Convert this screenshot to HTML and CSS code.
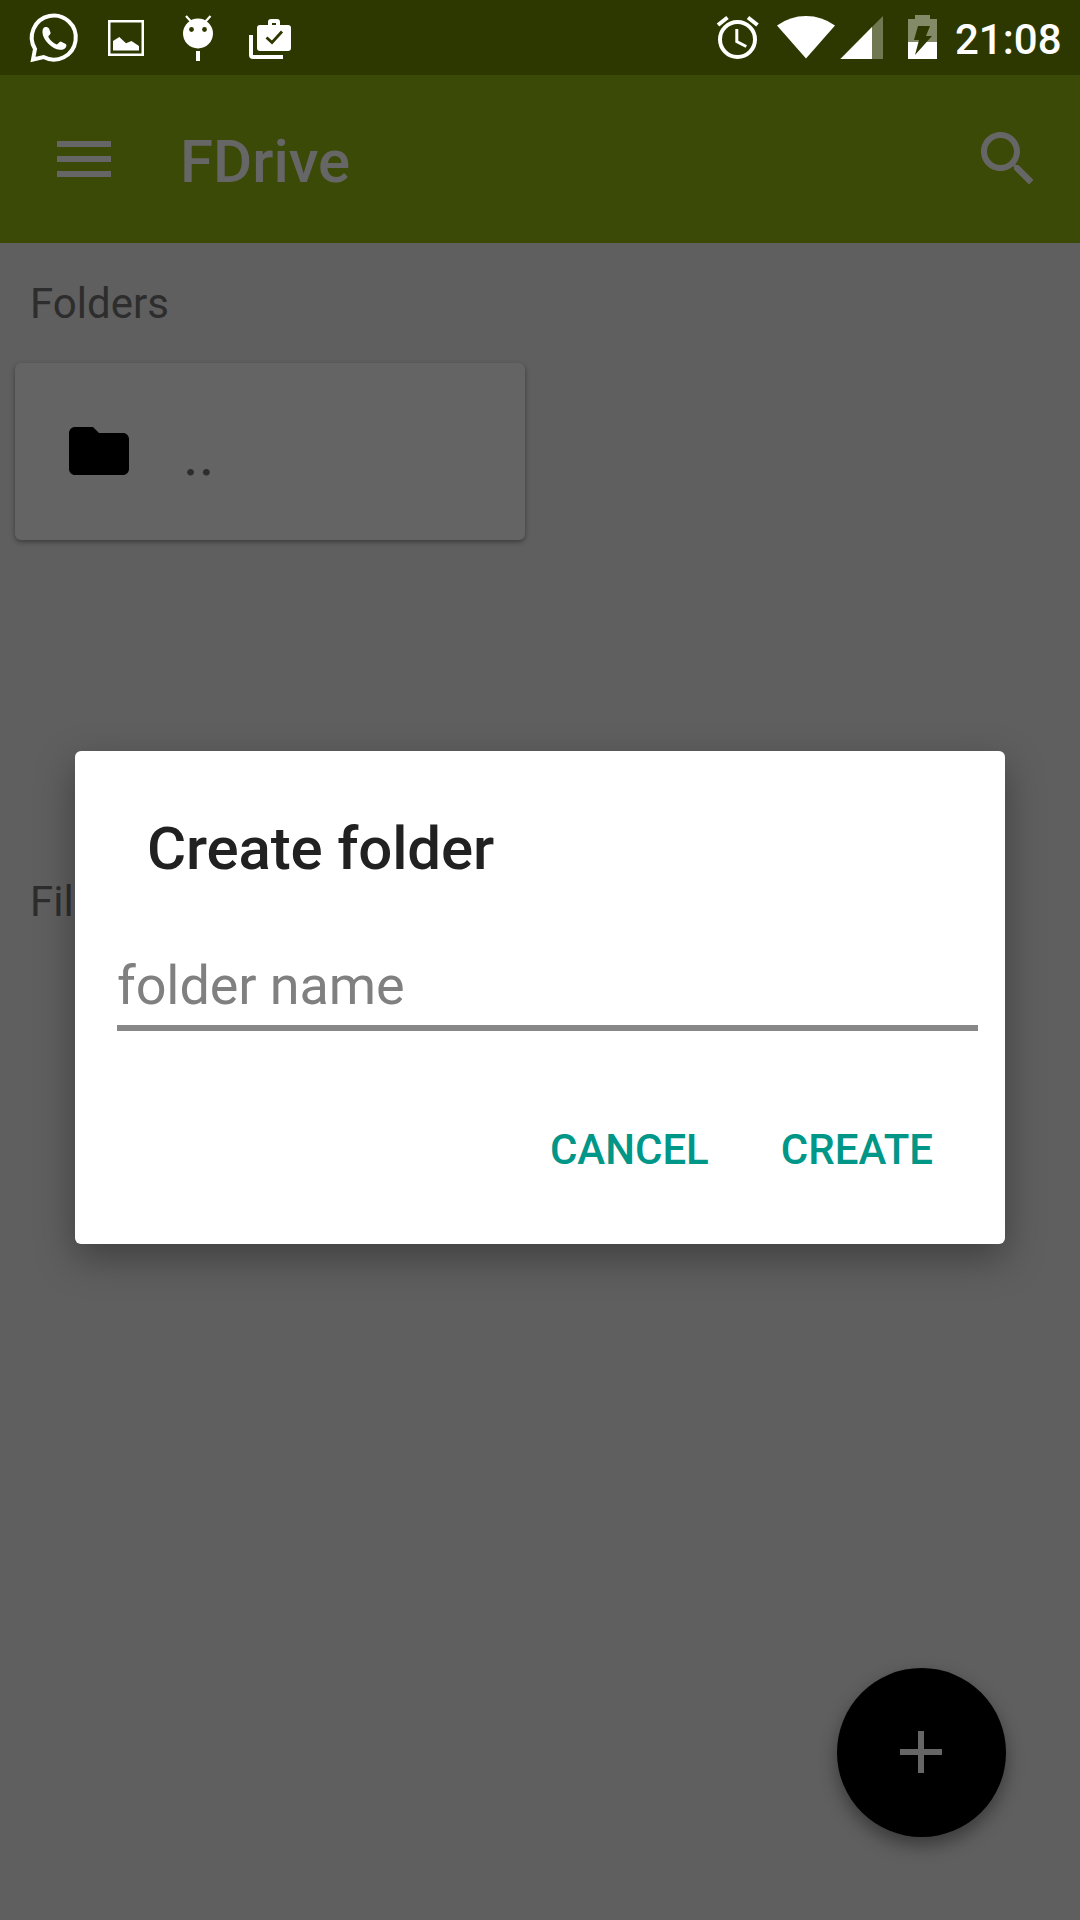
FILE: index.html
```html
<!DOCTYPE html>
<html lang="en">
<head>
<meta charset="utf-8">
<title>FDrive</title>
<link rel="stylesheet" href="styles.css">
</head>
<body>
<div class="screen">
  <header class="status">
    <div class="notifications">
      <svg width="60" height="75" viewBox="23.500 0 60 75"><path d="M34.500 49 A22 22 0 1 1 43 57 L32.500 59.500 Z" fill="none" stroke="#fff" stroke-width="4"/><path d="M44 27.200c1.700-.5 4 .1 4.600 1.600l1.500 4c.4 1.300-2.500 3.300-2.300 4 2 3.800 4.900 6.400 8.400 7.800.9.200 2.800-3 4-3l4.600 2.200c1.300.8 1.200 1.400.9 2.700-.7 2.700-3.700 3.500-6.300 3.300-8-.9-16.800-9.600-17.400-16.900-.2-2.700.5-5 2-5.700z" fill="#fff"/></svg>
      <svg width="60" height="75" viewBox="96 0 60 75"><path d="M109.250 21.250h33.500v33.500h-33.500z" fill="none" stroke="#fff" stroke-width="2.500"/><path d="M113 41l6.300-4 6.700 6.300 5.500-2.300 7.500 5v4.500h-26z" fill="#fff"/></svg>
      <svg width="60" height="75" viewBox="168 0 60 75"><path d="M186 16l5 5.500M210.500 16l-5 5.500" stroke="#fff" stroke-width="2.200"/><circle cx="198" cy="33.500" r="15" fill="#fff"/><circle cx="191.500" cy="29.500" r="2.400" fill="#2d3801"/><circle cx="204.500" cy="29.500" r="2.400" fill="#2d3801"/><path d="M196 51h4v10h-4z" fill="#fff"/></svg>
      <svg width="60" height="75" viewBox="240 0 60 75"><path d="M251 35v20q0 2 2 2h30" fill="none" stroke="#fff" stroke-width="4"/><path d="M260 25h8v-3q0-3 3-3h6q3 0 3 3v3h8q3 0 3 3v20q0 3-3 3h-28q-3 0-3-3v-20q0-3 3-3zM272 25h4v-2h-4z" fill="#fff" fill-rule="evenodd"/><path d="M266.500 37.500l5.500 5 10-11" fill="none" stroke="#2d3801" stroke-width="2.800"/></svg>
    </div>
    <div class="system">
      <svg width="60" height="75" viewBox="708 0 60 75"><circle cx="737.500" cy="39.500" r="17.500" fill="none" stroke="#fff" stroke-width="4"/><path d="M736.800 29v12.500l9.500 5" fill="none" stroke="#fff" stroke-width="3"/><path d="M718 25l9.500-7.500M757.500 25l-9.500-7.500" stroke="#fff" stroke-width="4"/></svg>
      <svg class="wifi" width="60" height="75" viewBox="776 0 60 75"><path d="M777 25.500Q790 16 806 16t29 9.500L806 58.500z" fill="#fff"/></svg>
      <svg width="44" height="75" viewBox="840 0 44 75"><path d="M883 16v43h-43z" fill="#fff" fill-opacity=".32"/><path d="M872 27v32h-31.500z" fill="#fff"/></svg>
      <svg class="battery" width="30" height="75" viewBox="908 0 30 75"><path d="M908 19h7v-4h15v4h7v40h-29z" fill="#828a68"/><path d="M908 42h29v17h-29z" fill="#fff"/><path d="M918 26h12l-4 10h6l-17 19 4-15h-5z" fill="#2d3801"/></svg>
      <time class="clock">21:08</time>
    </div>
  </header>
  <nav class="appbar">
    <svg width="72" height="72" viewBox="0 0 24 24"><path d="M3 18h18v-2H3v2zm0-5h18v-2H3v2zm0-7v2h18V6H3z" fill="#666"/></svg>
    <h1 class="app-title">FDrive</h1>
    <svg width="72" height="72" viewBox="0 0 24 24"><path fill="#666" d="M15.500 14h-.79l-.28-.27C15.410 12.590 16 11.110 16 9.500 16 5.910 13.090 3 9.500 3S3 5.910 3 9.500 5.910 16 9.500 16c1.610 0 3.090-.59 4.230-1.570l.27.28v.79l5 4.990L20.490 19l-4.990-5zm-6 0C7.010 14 5 11.990 5 9.500S7.010 5 9.500 5 14 7.010 14 9.500 11.990 14 9.500 14z"/></svg>
  </nav>
  <main class="content">
    <section class="folders">
      <h2 class="label">Folders</h2>
      <div class="card">
        <svg width="72" height="72" viewBox="0 0 24 24"><path d="M10 4H4c-1.100 0-1.990.9-1.990 2L2 18c0 1.100.9 2 2 2h16c1.100 0 2-.9 2-2V8c0-1.100-.9-2-2-2h-8l-2-2z"/></svg>
        <span class="card-name">..</span>
      </div>
    </section>
    <section>
      <h2 class="label">Files</h2>
    </section>
  </main>
  <button class="fab" aria-label="Add"><svg width="72" height="72" viewBox="0 0 24 24"><path d="M19 13h-6v6h-2v-6H5v-2h6V5h2v6h6v2z" fill="#666"/></svg></button>
  <div class="dialog" role="dialog">
    <h2 class="dialog-title">Create folder</h2>
    <div class="field">folder name</div>
    <div class="actions">
      <button class="action">CANCEL</button>
      <button class="action">CREATE</button>
    </div>
  </div>
</div>
</body>
</html>
```
FILE: styles.css
```css
* { box-sizing: border-box; }
body { margin: 0; font-family: Roboto, sans-serif; }
h1, h2 { margin: 0; }
svg { display: block; flex: none; }
button { border: 0; background: none; padding: 0; font-family: inherit; }

.screen { position: relative; width: 1080px; height: 1920px; overflow: hidden; background: #5f5f5f; }

.status { display: flex; justify-content: space-between; height: 75px; padding: 0 18px 0 24px; background: #2d3801; }
.notifications { display: flex; gap: 12px; }
.system { display: flex; gap: 6px; }
.wifi { margin: 0 -2px 0 2px; }
.battery { margin-left: 18px; }
.clock { width: 107px; margin-left: 11px; padding-top: 15px; font-size: 42px; font-weight: 500; line-height: 50px; color: #fff; white-space: nowrap; }

.appbar { display: flex; align-items: center; height: 168px; padding: 0 36px 0 48px; background: #3c4a07; }
.app-title { flex: 1; margin-left: 60px; padding-top: 6px; font-size: 60px; font-weight: 500; line-height: 70px; color: #666; }

.folders { height: 598px; }
.label { padding: 36px 0 0 30px; font-size: 42px; font-weight: 400; line-height: 50px; color: #2d2d2d; }
.card { display: flex; align-items: center; width: 510px; height: 177px; margin: 34px 0 0 15px; padding: 0 0 1px 48px; border-radius: 6px; background: #646464; box-shadow: 0 2px 5px rgba(0, 0, 0, .38); }
.card-name { margin-left: 48px; padding-top: 8px; font-size: 60px; line-height: 70px; color: #2d2d2d; }

.fab { position: absolute; left: 836.5px; top: 1667.5px; display: flex; align-items: center; justify-content: center; width: 169px; height: 169px; border-radius: 50%; background: #000; box-shadow: 0 8px 18px rgba(0, 0, 0, .4); }

.dialog { position: absolute; left: 75px; top: 751px; width: 930px; height: 493px; padding: 63px 27px 0 42px; border-radius: 6px; background: #fff; box-shadow: 0 14px 38px rgba(0, 0, 0, .34); }
.dialog-title { padding-left: 30px; font-size: 60px; font-weight: 500; line-height: 70px; letter-spacing: -.15px; color: #212121; }
.field { height: 77px; margin-top: 70px; border-bottom: 6px solid #888; font-size: 54px; line-height: 64px; letter-spacing: -.1px; color: #808080; }
.actions { display: flex; justify-content: flex-end; gap: 72px; margin-top: 94px; padding-right: 45px; }
.action { font-size: 42px; font-weight: 500; line-height: 50px; color: #009688; }
```
